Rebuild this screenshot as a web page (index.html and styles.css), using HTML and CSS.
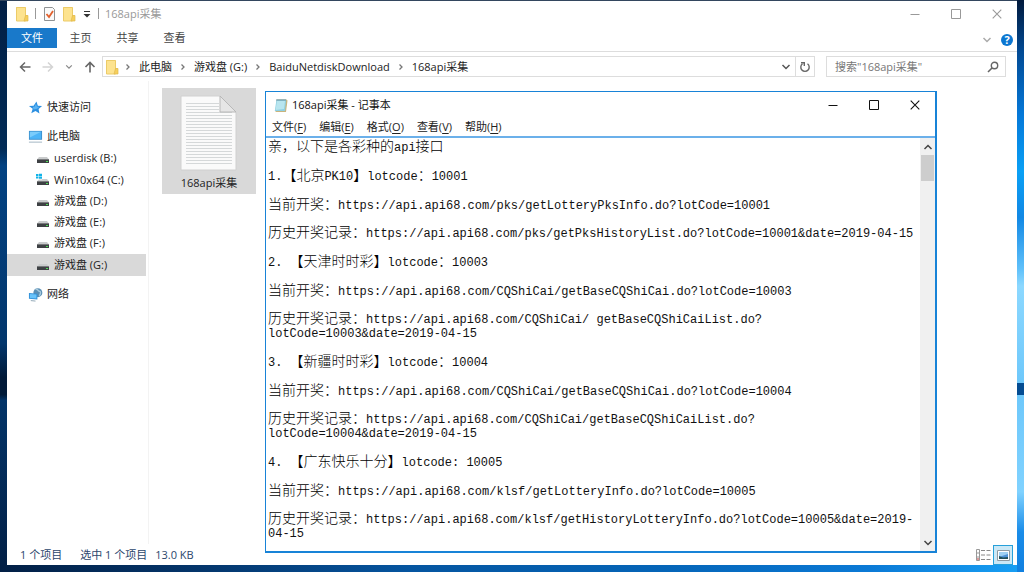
FILE: index.html
```html
<!DOCTYPE html>
<html lang="zh-CN">
<head>
<meta charset="utf-8">
<title>168api采集</title>
<link rel="stylesheet" href="styles.css">
</head>
<body>
<svg class="defs" aria-hidden="true">
  <defs>
    <symbol id="folder" viewBox="0 0 14 16"><path d="M1 1h9.500l.5 8h1.500l.5 6H1z" fill="#fbdc7c"/><path d="M1.500 1.500h9V15h-9z" fill="#fde38f" stroke="#eccb68"/><path d="M10.500 9.500H13V15h-4z" fill="#f6cf5c" stroke="#e0b94d" stroke-width=".7"/></symbol>
    <symbol id="chev-r" viewBox="0 0 8 8"><path d="M2.500 1.500L5 4 2.500 6.500" fill="none" stroke="currentColor" stroke-width="1.300"/></symbol>
    <symbol id="chev-d" viewBox="0 0 10 10"><path d="M1.500 3L5 6.500 8.500 3" fill="none" stroke="currentColor" stroke-width="1.500"/></symbol>
    <symbol id="chev-u" viewBox="0 0 10 10"><path d="M1.500 7L5 3.500 8.500 7" fill="none" stroke="currentColor" stroke-width="1.500"/></symbol>
    <symbol id="min" viewBox="0 0 10 10"><path d="M.5 5.500h9" stroke="currentColor"/></symbol>
    <symbol id="max" viewBox="0 0 10 10"><path d="M.5.5h9v9h-9z" fill="none" stroke="currentColor"/></symbol>
    <symbol id="close" viewBox="0 0 10 10"><path d="M.7.7l8.600 8.600M9.300.7L.7 9.300" stroke="currentColor" fill="none" stroke-width="1.100"/></symbol>
    <symbol id="disk" viewBox="0 0 14 14"><path d="M3 6h8l2 2.500H1z" fill="#c9cbcc"/><path d="M1 8h12v4H1z" fill="#3e4144"/><path d="M1 8h12v1H1z" fill="#77797b"/><path d="M10 10h2v1h-2z" fill="#4ddc55"/></symbol>
  </defs>
</svg>

<main class="desktop">
  <section class="explorer" aria-label="168api采集">
    <header class="titlebar">
      <svg class="folder"><use href="#folder"/></svg>
      <span class="divider"></span>
      <button class="icon-btn" aria-label="属性"><svg class="folder" viewBox="0 0 14 16"><path d="M2.500 1.500h8l2 2v11h-10z" fill="#fafafa" stroke="#8f9294"/><path d="M4.500 8l2.500 3 4-6" fill="none" stroke="#e2602c" stroke-width="1.800"/></svg></button>
      <button class="icon-btn" aria-label="新建文件夹"><svg class="folder"><use href="#folder"/></svg></button>
      <button class="icon-btn" aria-label="自定义快速访问工具栏"><svg class="glyph" viewBox="0 0 10 10"><path d="M2 2.500h6" stroke="#333"/><path d="M1.500 5h7L5 8.500z" fill="#333"/></svg></button>
      <span class="divider"></span>
      <h1 class="window-name">168api采集</h1>
      <div class="controls controls-muted">
        <button aria-label="最小化"><svg class="glyph"><use href="#min"/></svg></button>
        <button aria-label="最大化"><svg class="glyph"><use href="#max"/></svg></button>
        <button aria-label="关闭"><svg class="glyph"><use href="#close"/></svg></button>
      </div>
    </header>

    <nav class="ribbon" aria-label="功能区">
      <button class="tab tab-file">文件</button>
      <button class="tab">主页</button>
      <button class="tab">共享</button>
      <button class="tab">查看</button>
      <div class="ribbon-tools">
        <button class="icon-btn muted" aria-label="展开功能区"><svg class="glyph"><use href="#chev-d"/></svg></button>
        <button class="help" aria-label="帮助">?</button>
      </div>
    </nav>

    <div class="address-row">
      <div class="nav-buttons">
        <button class="icon-btn" aria-label="后退"><svg class="arrow" viewBox="0 0 12 12"><path d="M11.500 6H1.500M6 1.500L1.500 6 6 10.500" fill="none" stroke="#666" stroke-width="1.500"/></svg></button>
        <button class="icon-btn" aria-label="前进" disabled><svg class="arrow" viewBox="0 0 12 12"><path d="M.5 6h10M6 1.500L10.500 6 6 10.500" fill="none" stroke="#d4d4d4" stroke-width="1.500"/></svg></button>
        <button class="icon-btn recent" aria-label="最近位置"><svg class="small"><use href="#chev-d"/></svg></button>
        <button class="icon-btn" aria-label="向上"><svg class="arrow" viewBox="0 0 12 12"><path d="M6 11.500V1.500M1.500 6L6 1.500 10.500 6" fill="none" stroke="#666" stroke-width="1.600"/></svg></button>
      </div>
      <nav class="address" aria-label="地址">
        <svg class="folder"><use href="#folder"/></svg>
        <svg class="small"><use href="#chev-r"/></svg>
        <a href="#pc">此电脑</a>
        <svg class="small"><use href="#chev-r"/></svg>
        <a href="#g">游戏盘 (G:)</a>
        <svg class="small"><use href="#chev-r"/></svg>
        <a href="#download">BaiduNetdiskDownload</a>
        <svg class="small"><use href="#chev-r"/></svg>
        <a href="#api">168api采集</a>
        <div class="address-end">
          <button class="icon-btn" aria-label="历史记录"><svg class="glyph"><use href="#chev-d"/></svg></button>
          <button class="icon-btn refresh" aria-label="刷新"><svg class="arrow" viewBox="0 0 12 12"><path d="M8.500 2.800A4.200 4.200 0 1 1 3.500 2.800" fill="none" stroke="#666" stroke-width="1.400"/><path d="M2 1.700h3.300V5" fill="none" stroke="#666" stroke-width="1.400"/></svg></button>
        </div>
      </nav>
      <label class="search">
        <input type="text" placeholder='搜索"168api采集"' aria-label="搜索">
        <svg class="arrow" viewBox="0 0 12 12"><circle cx="7.500" cy="4.500" r="3.200" fill="none" stroke="#666" stroke-width="1.400"/><path d="M5 7L1 11" stroke="#666" stroke-width="1.600"/></svg>
      </label>
    </div>

    <div class="body">
      <nav class="tree" aria-label="导航窗格">
        <a class="root" href="#quick"><svg class="tree-icon" viewBox="0 0 16 16"><path d="M9 1.500l1.500 4.500 4.500.5-3.700 3 .9 5-4.200-2.700L3.500 14l1.500-4.700L1 6.500l5-.3z" fill="#2c8fe0"/><path d="M8.500 4l1 3 2.500.4-2.300 1.800-3.700.8L5 7.300l2-.2z" fill="#5bb4f3"/></svg>快速访问</a>
        <a class="root" href="#pc"><svg class="tree-icon" viewBox="0 0 16 16"><path d="M1 2h14v9.500H1z" fill="#3d91cf"/><path d="M2 3h12v7.500H2z" fill="#4cb4f7"/><path d="M2 3h12L2 9z" fill="#7accfb"/><path d="M1 14h14" stroke="#9fb2c1"/></svg>此电脑</a>
        <a class="drive" href="#b"><svg class="drive-icon"><use href="#disk"/></svg>userdisk (B:)</a>
        <a class="drive" href="#c"><svg class="drive-icon" viewBox="0 0 14 14"><use href="#disk"/><path d="M0 0h6v6.500H0z" fill="#fff"/><path d="M0 1h2.500v2H0zM3 .7h3V3H3zM0 3.500h2.500v2H0zM3 3.500h3v2.300H3z" fill="#12b3e8"/></svg>Win10x64 (C:)</a>
        <a class="drive" href="#d"><svg class="drive-icon"><use href="#disk"/></svg>游戏盘 (D:)</a>
        <a class="drive" href="#e"><svg class="drive-icon"><use href="#disk"/></svg>游戏盘 (E:)</a>
        <a class="drive" href="#f"><svg class="drive-icon"><use href="#disk"/></svg>游戏盘 (F:)</a>
        <a class="drive selected" href="#g" aria-current="true"><svg class="drive-icon"><use href="#disk"/></svg>游戏盘 (G:)</a>
        <a class="root network" href="#net"><svg class="tree-icon" viewBox="0 0 16 16"><circle cx="10.500" cy="6" r="4.800" fill="#5a8fb5"/><path d="M8 2.500c3-1 2 2 4 2s1.500 3 0 5" fill="none" stroke="#a8c9dc" stroke-width="1.500"/><path d="M1 6.500l9 .7v6L1 12.500z" fill="#2f8fd8"/><path d="M2 7.500l7 .5v4.200l-7-.5z" fill="#69c3fa"/><path d="M3 14.500l5 .5" stroke="#8da4b3"/></svg>网络</a>
      </nav>
      <div class="files">
        <button class="file">
          <svg class="page" viewBox="0 0 58 76"><path d="M1 1h39l16 16v58H1z" fill="#fafafa" stroke="#d0d0d0"/><path d="M6 8.500h33M6 11.500h33M6 14.500h33M6 17.500h46M6 20.500h46M6 23.500h46M6 26.500h46M6 29.500h46M6 32.500h46M6 35.500h46M6 38.500h46M6 41.500h46M6 44.500h46M6 47.500h46M6 50.500h46M6 53.500h46M6 56.500h46M6 59.500h46M6 62.500h46M6 65.500h46M6 68.500h46" stroke="#d5d8d9"/><path d="M40 1l16 16H40z" fill="#e6e6e6" stroke="#b8b8b8"/></svg>
          168api采集
        </button>
      </div>
    </div>

    <footer class="status">
      <span>1 个项目</span>
      <span>选中 1 个项目</span>
      <span class="size">13.0 KB</span>
      <div class="views">
        <button class="view" aria-label="详细信息"><svg class="view-icon" viewBox="0 0 16 14"><path d="M1.500 1.500h3v11h-3zM1.500 5h3M1.500 9h3" fill="#fff" stroke="#999"/><path d="M2 10h2v2H2z" fill="#d99"/><path d="M6 2.500h4M11.500 2.500h4M6 7h4M11.500 7h4M6 11.500h4M11.500 11.500h4" stroke="#888"/></svg></button>
        <button class="view view-active" aria-label="大图标"><svg class="view-icon" viewBox="0 0 16 14"><path d="M2.500 2.500h12v10h-12z" fill="#fff" stroke="#8f9aa2"/><path d="M4 4h9v7H4z" fill="#4f92d6"/><path d="M4 4h9v2L4 9z" fill="#9fd0f3"/><path d="M4 8l4 1.500 5-.5v2H4z" fill="#23505a"/></svg></button>
      </div>
    </footer>
  </section>

  <section class="notepad" aria-label="168api采集 - 记事本">
    <header class="note-title">
      <svg class="note-icon" viewBox="0 0 14 15"><path d="M3 1.500h9.500l1 1L12 14H1.500z" fill="#c9b47d"/><path d="M2.500 1.500h9.700L11 13H.8z" fill="#8fd0e2"/><path d="M3 3h8L10 11 1.500 12z" fill="#b8e5ef"/><path d="M3 1v2M5 1v2M7 1v2M9 1v2M11 1v2" stroke="#6d8790" stroke-width=".8"/></svg>
      <h2 class="window-name">168api采集 - 记事本</h2>
      <div class="controls">
        <button aria-label="最小化"><svg class="glyph"><use href="#min"/></svg></button>
        <button aria-label="最大化"><svg class="glyph"><use href="#max"/></svg></button>
        <button aria-label="关闭"><svg class="glyph"><use href="#close"/></svg></button>
      </div>
    </header>
    <nav class="menu" aria-label="菜单">
      <button>文件(<u>F</u>)</button>
      <button>编辑(<u>E</u>)</button>
      <button>格式(<u>O</u>)</button>
      <button>查看(<u>V</u>)</button>
      <button>帮助(<u>H</u>)</button>
    </nav>
    <div class="editor">
      <div class="text" role="textbox" aria-multiline="true" aria-label="文本编辑器" contenteditable="true" spellcheck="false">
        <div class="entry">
          <p><b>亲，以下是各彩种的</b>api<b>接口</b></p>
        </div>
        <div class="entry">
          <p>1.<b>【北京</b>PK10<b>】</b>lotcode<b>：</b>10001</p>
          <p><b>当前开奖：</b>https://api.api68.com/pks/getLotteryPksInfo.do?lotCode=10001</p>
          <p><b>历史开奖记录：</b>https://api.api68.com/pks/getPksHistoryList.do?lotCode=10001&amp;date=2019-04-15</p>
        </div>
        <div class="entry">
          <p>2. <b>【天津时时彩】</b>lotcode<b>：</b>10003</p>
          <p><b>当前开奖：</b>https://api.api68.com/CQShiCai/getBaseCQShiCai.do?lotCode=10003</p>
          <p><b>历史开奖记录：</b>https://api.api68.com/CQShiCai/ getBaseCQShiCaiList.do?<br>lotCode=10003&amp;date=2019-04-15</p>
        </div>
        <div class="entry">
          <p>3. <b>【新疆时时彩】</b>lotcode<b>：</b>10004</p>
          <p><b>当前开奖：</b>https://api.api68.com/CQShiCai/getBaseCQShiCai.do?lotCode=10004</p>
          <p><b>历史开奖记录：</b>https://api.api68.com/CQShiCai/getBaseCQShiCaiList.do?<br>lotCode=10004&amp;date=2019-04-15</p>
        </div>
        <div class="entry">
          <p>4. <b>【广东快乐十分】</b>lotcode: 10005</p>
          <p><b>当前开奖：</b>https://api.api68.com/klsf/getLotteryInfo.do?lotCode=10005</p>
          <p><b>历史开奖记录：</b>https://api.api68.com/klsf/getHistoryLotteryInfo.do?lotCode=10005&amp;date=2019-<br>04-15</p>
        </div>
      </div>
      <div class="scrollbar">
        <button aria-label="向上滚动"><svg class="glyph"><use href="#chev-u"/></svg></button>
        <div class="track"><div class="thumb"></div></div>
        <button aria-label="向下滚动"><svg class="glyph"><use href="#chev-d"/></svg></button>
      </div>
    </div>
  </section>
</main>
</body>
</html>
```
FILE: styles.css
```css
* { box-sizing: border-box; }

body {
  margin: 0;
  font: 11px/16px "Open Sans", "Noto Sans CJK SC", sans-serif;
  color: #222;
}

h1, h2, p { margin: 0; font: inherit; }
a { color: inherit; text-decoration: none; }
button {
  margin: 0;
  padding: 0;
  border: 0;
  background: none;
  font: inherit;
  color: inherit;
}
svg { display: block; flex: none; }
.defs { position: absolute; width: 0; height: 0; }

.desktop {
  position: relative;
  display: flex;
  min-height: 100vh;
  padding: 1px 7px 7px;
  background:
    linear-gradient(#021a3c 0, #024a94 9%, #0578d8 20%, #0aa0f5 30%, #1288e4 38%, #5fc0fa 47%, #8cd8ff 50%, #6ec8fb 67%, #044c92 67%, #044c92 69%, #6ec8fb 69%, #80d2ff 86%, #1a8ce8 93%, #1080e0 100%) right / 7px 100% no-repeat,
    linear-gradient(90deg, #021f45 0, #04366c 20%, #0555a0 40%, #0565b8 65%, #0b7ad6 85%, #18a0f4 100%) bottom / 100% 7px no-repeat,
    linear-gradient(#33465e, #33465e) top / 100% 1px no-repeat,
    linear-gradient(#021f45 0, #022b56 26%, #034282 29%, #02366c 60%, #011a38 66%, #011a38 69%, #033468 70%, #021f45 100%);
}

.explorer {
  flex: 1;
  display: flex;
  flex-direction: column;
  min-width: 0;
  background: #fff;
}

.folder { width: 14px; height: 16px; }
.glyph { width: 10px; height: 10px; }
.small { width: 8px; height: 8px; }
.arrow { width: 12px; height: 12px; }
.icon-btn { display: flex; align-items: center; color: #555; }
.muted { color: #aaa; }

.titlebar {
  display: flex;
  align-items: center;
  gap: 6px;
  height: 27px;
  padding: 0 0 2px 8px;
}
.titlebar .window-name { color: #999; }
.divider { width: 1px; height: 11px; background: #999; }
.controls { display: flex; margin-left: auto; color: #111; }
.controls button {
  display: flex;
  justify-content: center;
  align-items: center;
  width: 41px;
  height: 26px;
}
.controls-muted { color: #999; }

.ribbon {
  display: flex;
  height: 24px;
  border-bottom: 1px solid #ddd;
}
.tab { width: 47px; height: 20px; color: #444; }
.tab-file { width: 50px; background: #1979ca; color: #fff; }
.ribbon-tools { display: flex; align-items: center; gap: 9px; margin-left: auto; padding-right: 4px; }
.help {
  width: 12px;
  height: 12px;
  border-radius: 50%;
  background: #0b76d1;
  color: #fff;
  font-weight: 700;
  line-height: 12px;
}

.address-row {
  display: flex;
  gap: 11px;
  padding: 4px 11px 4px 12px;
}
.nav-buttons {
  display: flex;
  align-items: center;
  justify-content: space-between;
  width: 78px;
  margin-right: -6px;
  padding-right: 1px;
}
.recent { color: #888; }
.address {
  flex: 1;
  display: flex;
  align-items: center;
  gap: 7px;
  height: 21px;
  padding-left: 2px;
  border: 1px solid #ddd;
}
.address .folder { margin-right: -2px; }
.address .small { color: #777; }
.address-end { display: flex; gap: 4px; height: 100%; margin-left: auto; }
.refresh { padding: 0 3px; border-left: 1px solid #ddd; }
.search {
  display: flex;
  align-items: center;
  width: 180px;
  height: 21px;
  padding: 0 6px 0 8px;
  border: 1px solid #ddd;
}
.search input {
  flex: 1;
  min-width: 0;
  padding: 0;
  border: 0;
  outline: 0;
  background: none;
  font: inherit;
}
.search input::placeholder { color: #777; opacity: 1; }

.body { flex: 1; display: flex; }
.tree {
  width: 142px;
  padding: 15px 2px 0 0;
  border-right: 1px solid #f3f3f3;
}
.tree a { display: flex; align-items: center; }
.root { gap: 4px; height: 22px; padding-left: 21px; margin-bottom: 7px; }
.root + .drive { margin-top: -7px; }
.drive { gap: 4px; height: 22px; padding-left: 29px; }
.drive + .drive { height: 21px; }
.drive + .selected { height: 22px; margin-top: 1px; background: #d9d9d9; }
.network { margin-top: 7px; }
.tree-icon { width: 15px; height: 15px; }
.drive-icon { width: 14px; height: 14px; }

.files { padding: 7px 13px; }
.file {
  display: flex;
  flex-direction: column;
  align-items: center;
  gap: 4px;
  width: 94px;
  padding: 7px 0 3px;
  background: #d9d9d9;
}
.page { width: 58px; height: 76px; }

.status {
  display: flex;
  align-items: center;
  gap: 18px;
  height: 21px;
  padding: 0 4px 0 13px;
  color: #2b466c;
}
.size { margin-left: -10px; }
.views { display: flex; margin-left: auto; }
.view { display: flex; align-items: center; justify-content: center; width: 20px; height: 20px; }
.view-active { border: 1px solid #26a0da; background: #cbe8f6; }
.view-icon { width: 16px; height: 14px; }

.notepad {
  position: absolute;
  inset: 91px 87px 19px 265px;
  display: flex;
  flex-direction: column;
  border: 1px solid #1883d7;
  border-width: 1px 2px 2px 1px;
  background: #fff;
}
.note-title {
  display: flex;
  align-items: center;
  gap: 4px;
  padding-left: 8px;
  color: #111;
}
.note-icon { width: 14px; height: 15px; }
.menu { display: flex; gap: 13px; height: 18px; padding-left: 6px; }
.menu u { text-underline-offset: 2px; }

.editor {
  flex: 1;
  display: flex;
  min-height: 0;
  border-top: 2px solid #6bb0ea;
}
.text {
  flex: 1;
  min-width: 0;
  display: flex;
  flex-direction: column;
  gap: 15px;
  padding: 3px 0 0 2px;
  outline: 0;
  font: 12px/14px "Liberation Mono", "Noto Sans CJK SC", monospace;
  color: #111;
  white-space: nowrap;
}
.text b {
  font-family: "Noto Sans CJK SC", sans-serif;
  font-size: 14px;
  font-weight: 300;
  line-height: 0;
  color: #000;
  text-spacing-trim: space-all;
}
.entry { display: flex; flex-direction: column; gap: 14px; }
.entry p:first-child { margin-bottom: 1px; }
.entry:first-child p { margin-bottom: 0; }

.scrollbar {
  display: flex;
  flex-direction: column;
  width: 15px;
  background: #f0f0f0;
  color: #444;
}
.scrollbar button { display: flex; align-items: center; justify-content: center; height: 17px; }
.track { flex: 1; padding: 0 1px; }
.thumb { height: 26px; background: #cdcdcd; }
```
